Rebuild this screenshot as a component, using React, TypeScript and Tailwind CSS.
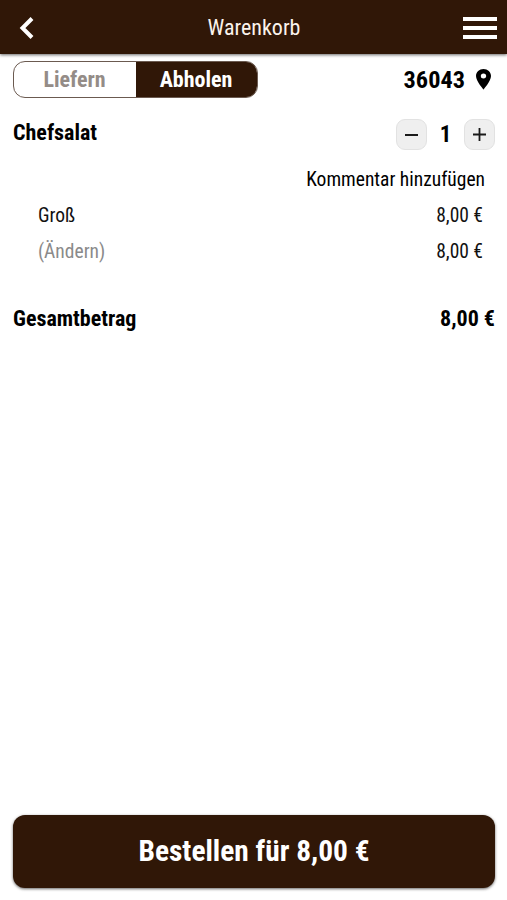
import React from "react";

type item = {
  label: string;
  price: string;
  muted?: boolean;
};

const items: item[] = [
  { label: "Groß", price: "8,00 €" },
  { label: "(Ändern)", price: "8,00 €", muted: true },
];

const BackIcon = () => (
  <svg width="16" height="24" viewBox="0 0 16 24" fill="none">
    <path d="M14 2.500 4.500 12l9.500 9.500" stroke="#fff" strokeWidth="4" />
  </svg>
);

const PinIcon = () => (
  <svg width="15" height="21" viewBox="0 0 14 21" preserveAspectRatio="none">
    <path
      fill="#000"
      fillRule="evenodd"
      d="M7 0C3.100 0 0 3.100 0 7c0 5.200 7 13.500 7 13.500S14 12.200 14 7c0-3.900-3.100-7-7-7Zm0 9.500a2.500 2.500 0 1 1 0-5 2.500 2.500 0 0 1 0 5Z"
    />
  </svg>
);

const Header = () => (
  <header className="flex h-[54px] items-center justify-between bg-[#301707] pr-[10px] pl-[18px] shadow-[0_1px_3px_rgba(0,0,0,0.6)]">
    <button className="flex w-[27px] items-center pt-[2px]" aria-label="Zurück">
      <BackIcon />
    </button>
    <h1 className="pt-[2px] text-[22px] leading-[54px] text-[#fbf3ec]">Warenkorb</h1>
    <button className="flex w-[34px] flex-col gap-[5px] pt-[2px]" aria-label="Menü">
      <span className="h-1 w-full bg-white" />
      <span className="h-1 w-full bg-white" />
      <span className="h-1 w-full bg-white" />
    </button>
  </header>
);

const DeliveryToggle = () => (
  <div className="flex h-[37px] w-[245px] overflow-hidden rounded-[12px] border border-[#6b5a50] text-[22px] leading-[35px] font-bold">
    <button className="w-[122px] pr-[1px] text-[#948c87]">Liefern</button>
    <button className="flex-1 bg-[#301707] pr-[1px] text-white">Abholen</button>
  </div>
);

const Stepper = () => (
  <div className="flex items-center">
    <button
      className="flex size-[31px] items-center justify-center rounded-[9px] border border-[#e2e2e2] bg-[#efefef]"
      aria-label="Weniger"
    >
      <span className="h-[2px] w-[13px] bg-[#1a1a1a]" />
    </button>
    <span className="w-[37px] pt-[1px] text-center text-[23px] leading-[30px] font-bold">1</span>
    <button
      className="flex size-[31px] items-center justify-center rounded-[9px] border border-[#e2e2e2] bg-[#efefef]"
      aria-label="Mehr"
    >
      <svg width="13" height="13" viewBox="0 0 13 13">
        <path d="M0 6.500h13M6.500 0v13" stroke="#1a1a1a" strokeWidth="1.800" />
      </svg>
    </button>
  </div>
);

const App = () => {
  return (
    <div className="flex h-[900px] w-[507px] flex-col bg-white font-['Roboto_Condensed',Roboto,sans-serif] text-black [font-stretch:condensed]">
      <Header />
      <main className="flex flex-1 flex-col pr-[12px] pl-[13px]">
        <div className="mt-[7px] flex items-start justify-between pr-[4px]">
          <DeliveryToggle />
          <div className="flex items-center gap-[11px] text-[24.300px] leading-[37px] font-bold">
            36043
            <PinIcon />
          </div>
        </div>

        <div className="mt-[21px] flex items-start justify-between">
          <h2 className="text-[22px] leading-[28px] font-bold">Chefsalat</h2>
          <Stepper />
        </div>
        <button className="mt-[12px] mr-[10px] self-end text-[19.500px] leading-[35px]">
          Kommentar hinzufügen
        </button>
        <div className="mt-[1px] pr-[12px] pl-[25px] text-[19.500px] text-[#111]">
          {items.map((entry) => (
            <div key={entry.label} className="flex h-[36px] items-center justify-between">
              <span className={entry.muted ? "text-[#8a8a8a]" : ""}>{entry.label}</span>
              <span>{entry.price}</span>
            </div>
          ))}
        </div>

        <div className="mt-[33px] flex justify-between text-[22px] leading-[32px] font-bold">
          <span>Gesamtbetrag</span>
          <span>8,00 €</span>
        </div>

        <button className="mt-auto mb-[12px] h-[73px] w-full rounded-[12px] bg-[#301707] text-[29.400px] font-bold text-white shadow-[0_1px_3px_rgba(0,0,0,0.6)]">
          Bestellen für 8,00 €
        </button>
      </main>
    </div>
  );
};

export default App;
